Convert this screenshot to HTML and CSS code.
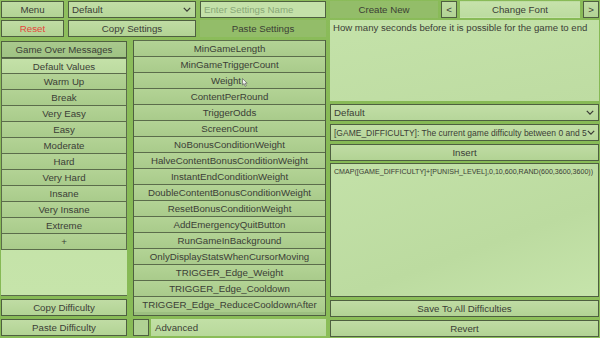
FILE: index.html
```html
<!DOCTYPE html>
<html>
<head>
<meta charset="utf-8">
<link rel="stylesheet" href="styles.css">
</head>
<body>
<div class="app">
  <div class="leftpart">
    <div class="toprow">
      <div class="btn">Menu</div>
      <div class="select"><span>Default</span><svg class="chev" viewBox="0 0 10 6"><polyline points="1,1 5,5 9,1"/></svg></div>
      <div class="input placeholder">Enter Settings Name</div>
    </div>
    <div class="toprow">
      <div class="btn red">Reset</div>
      <div class="btn">Copy Settings</div>
      <div class="btn dark">Paste Settings</div>
    </div>
    <div class="body">
      <div class="leftcol">
        <div class="btn mid">Game Over Messages</div>
        <div class="list diffs">
          <div class="item sel">Default Values</div>
          <div class="item">Warm Up</div>
          <div class="item">Break</div>
          <div class="item">Very Easy</div>
          <div class="item">Easy</div>
          <div class="item">Moderate</div>
          <div class="item">Hard</div>
          <div class="item">Very Hard</div>
          <div class="item">Insane</div>
          <div class="item">Very Insane</div>
          <div class="item">Extreme</div>
          <div class="item">+</div>
        </div>
        <div class="btn">Copy Difficulty</div>
      </div>
      <div class="list settings">
        <div class="item">MinGameLength</div>
        <div class="item">MinGameTriggerCount</div>
        <div class="item">Weight<svg class="cursor" viewBox="0 0 6 9"><path d="M0.5,0.5 L0.5,7 L2,5.6 L3.2,8.3 L4.3,7.8 L3.1,5.2 L5.2,5.2 Z"/></svg></div>
        <div class="item">ContentPerRound</div>
        <div class="item">TriggerOdds</div>
        <div class="item">ScreenCount</div>
        <div class="item">NoBonusConditionWeight</div>
        <div class="item">HalveContentBonusConditionWeight</div>
        <div class="item">InstantEndConditionWeight</div>
        <div class="item">DoubleContentBonusConditionWeight</div>
        <div class="item">ResetBonusConditionWeight</div>
        <div class="item">AddEmergencyQuitButton</div>
        <div class="item">RunGameInBackground</div>
        <div class="item">OnlyDisplayStatsWhenCursorMoving</div>
        <div class="item">TRIGGER_Edge_Weight</div>
        <div class="item">TRIGGER_Edge_Cooldown</div>
        <div class="item">TRIGGER_Edge_ReduceCooldownAfter</div>
      </div>
    </div>
    <div class="bottomrow">
      <div class="btn">Paste Difficulty</div>
      <div class="advanced">
        <div class="check"></div>
        <div class="advlabel">Advanced</div>
      </div>
    </div>
  </div>
  <div class="rightpart">
    <div class="fontrow">
      <div class="btn dark create">Create New</div>
      <div class="btn small">&lt;</div>
      <div class="btn light font">Change Font</div>
      <div class="btn small">&gt;</div>
    </div>
    <div class="desc">How many seconds before it is possible for the game to end</div>
    <div class="select wide sel1"><span>Default</span><svg class="chev" viewBox="0 0 10 6"><polyline points="1,1 5,5 9,1"/></svg></div>
    <div class="select wide sel2"><span class="vartext">[GAME_DIFFICULTY]: The current game difficulty between 0 and 5</span><svg class="chev" viewBox="0 0 10 6"><polyline points="1,1 5,5 9,1"/></svg></div>
    <div class="btn insert">Insert</div>
    <div class="code">CMAP([GAME_DIFFICULTY]+[PUNISH_LEVEL],0,10,600,RAND(600,3600,3600))</div>
    <div class="btn save">Save To All Difficulties</div>
    <div class="btn revert">Revert</div>
  </div>
</div>
</body>
</html>
```
FILE: styles.css
```css
html, body {
  margin: 0;
  padding: 0;
}
body {
  width: 600px;
  height: 338px;
  overflow: hidden;
  font-family: "Liberation Sans", Arial, sans-serif;
  font-size: 9.7px;
  color: #3b3d36;
  background: linear-gradient(160deg, #8fbe5e 0%, #86b955 50%, #8ec05b 100%);
}
.app {
  display: flex;
  gap: 3px;
  padding: 1px;
  height: 336px;
}
.leftpart {
  width: 326px;
  flex: none;
  display: flex;
  flex-direction: column;
}
.toprow {
  display: grid;
  grid-template-columns: 63px 128px 126px;
  gap: 4px;
  height: 17px;
  margin-bottom: 2px;
}
.btn {
  box-sizing: border-box;
  height: 17px;
  flex: none;
  border: 1px solid #4e5f40;
  background: linear-gradient(180deg, #c0dca4 0%, #b2d394 100%);
  display: flex;
  align-items: center;
  justify-content: center;
  white-space: nowrap;
}
.btn.red { color: #e6463c; }
.btn.dark {
  border-color: transparent;
  background: #93bd69;
}
.btn.mid {
  background: linear-gradient(180deg, #a9c98d 0%, #9fc283 100%);
}
.btn.light {
  background: linear-gradient(180deg, #c6e2ab 0%, #bcdba0 100%);
  border-color: transparent;
}
.select {
  box-sizing: border-box;
  height: 17px;
  flex: none;
  border: 1px solid #4e5f40;
  background: linear-gradient(180deg, #c2dea6 0%, #b6d69a 100%);
  display: flex;
  align-items: center;
  justify-content: space-between;
  padding: 0 4px 0 3px;
  white-space: nowrap;
  min-width: 0;
}
.chev {
  width: 8px;
  height: 5px;
  fill: none;
  stroke: #3b3d36;
  stroke-width: 1.6;
  flex: none;
}
.input {
  box-sizing: border-box;
  height: 17px;
  border: 1px solid #4e5f40;
  background: #c4e1a9;
  display: flex;
  align-items: center;
  padding-left: 3px;
}
.placeholder { color: #88a877; }
.body {
  display: flex;
  gap: 6px;
  margin-top: 1px;
  height: 277px;
}
.leftcol {
  width: 126px;
  display: flex;
  flex-direction: column;
}
.leftcol .btn.mid { height: 17px; margin-top: 1px; }
.list {
  box-sizing: border-box;
  display: flex;
  flex-direction: column;
}
.diffs {
  height: 238px;
  margin-bottom: 3px;
  background: linear-gradient(180deg, #c0e0a4 0%, #c6e4aa 100%);
  border-bottom: 1px solid #5a6b4a;
}
.item {
  box-sizing: border-box;
  height: 16px;
  flex: none;
  border: 1px solid #5b6c4b;
  border-top: none;
  background: linear-gradient(180deg, #b3d395 0%, #a9cb8b 100%);
  display: flex;
  align-items: center;
  justify-content: center;
  white-space: nowrap;
}
.diffs .item:first-child { border-top: 1px solid #5b6c4b; }
.item.sel {
  background: linear-gradient(180deg, #c4e1a8 0%, #bcdba0 100%);
}
.settings {
  width: 193px;
  height: 276px;
  border: 1px solid #4e5f40;
  border-top: none;
  background: #9cbf80;
}
.settings .item {
  border-left: none;
  border-right: none;
  border-top: 1px solid #5b6c4b;
  border-bottom: none;
}
.cursor {
  width: 6px;
  height: 9px;
  fill: #f4f4f4;
  stroke: #555;
  stroke-width: 0.6;
  margin-left: 1px;
  margin-top: 3px;
}
.bottomrow {
  display: flex;
  gap: 6px;
  margin-top: 2px;
  height: 17px;
}
.bottomrow > .btn { width: 126px; }
.advanced {
  display: flex;
  gap: 2px;
  width: 193px;
}
.check {
  box-sizing: border-box;
  width: 16px;
  height: 17px;
  border: 1px solid #4e5f40;
  background: #b0d194;
}
.advlabel {
  flex: 1;
  background: linear-gradient(180deg, #c2e0a6 0%, #b8d99b 100%);
  display: flex;
  align-items: center;
  padding-left: 4px;
}
.rightpart {
  width: 269px;
  flex: none;
  min-width: 0;
  display: flex;
  flex-direction: column;
}
.fontrow {
  display: flex;
  gap: 3px;
  height: 17px;
  flex: none;
}
.create { width: 108px; }
.btn.small { width: 16px; }
.btn.font { flex: 1; min-width: 0; }
.desc {
  height: 81px;
  flex: none;
  box-sizing: border-box;
  margin-top: 2px;
  background: linear-gradient(170deg, #c4e2a9 0%, #bedca2 100%);
  padding: 2px 3px;
  font-size: 9.6px;
  white-space: nowrap;
}
.wide { width: 100%; }
.sel1 { margin-top: 3px; }
.sel2 { margin-top: 3px; }
.vartext { font-size: 8.5px; }
.insert { margin-top: 3px; }
.code {
  box-sizing: border-box;
  height: 134px;
  flex: none;
  margin-top: 2px;
  border: 1px solid #4e5f40;
  background: linear-gradient(160deg, #c3e1a8 0%, #bcdba0 60%, #c6e4ab 100%);
  font-size: 7.1px;
  white-space: nowrap;
  overflow: hidden;
  padding: 4px 3px;
}
.save { margin-top: 3px; }
.revert { margin-top: 3px; }
```
